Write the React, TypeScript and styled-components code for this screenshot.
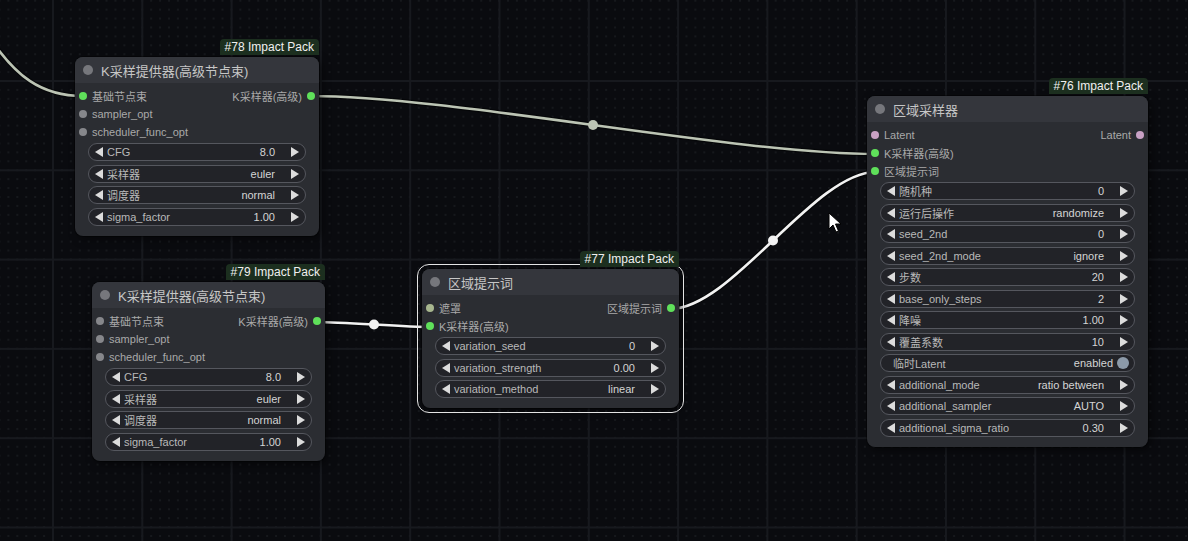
import React from "react";
import styled, { createGlobalStyle, css } from "styled-components";

const GlobalStyle = createGlobalStyle`
  html, body { margin: 0; padding: 0; background: #0b0c10; }
  body { font-family: "Liberation Sans", Arial, "Noto Sans CJK SC", sans-serif; }
`;

const Canvas = styled.div`
  position: relative;
  width: 1188px;
  height: 541px;
  overflow: hidden;
  background-color: #0a0b0f;
  background-image:
    linear-gradient(to right, #17191e 2px, transparent 2px),
    linear-gradient(to bottom, #17191e 2px, transparent 2px),
    radial-gradient(circle at 1px 1px, #16181c 0.9px, transparent 1.2px);
  background-size: 89.3px 89.3px, 89.3px 89.3px, 8.93px 8.93px;
  background-position: 52px 0, 0 80px, 52px 80px;
`;

const LinkLayer = styled.svg`
  position: absolute;
  left: 0;
  top: 0;
  width: 1188px;
  height: 541px;
`;

const NodeBox = styled.div<{ $x: number; $y: number; $w: number; $selected?: boolean }>`
  position: absolute;
  left: ${(p) => p.$x}px;
  top: ${(p) => p.$y}px;
  width: ${(p) => p.$w}px;
  background: #2b2d32;
  border-radius: 8px;
  box-shadow: 0 0 0 1px rgba(0, 0, 0, 0.35), 3px 3px 8px rgba(0, 0, 0, 0.5);
  display: flex;
  flex-direction: column;
  ${(p) =>
    p.$selected &&
    css`
      &::before {
        content: "";
        position: absolute;
        inset: -5px;
        border: 1.5px solid #e4e4e4;
        border-radius: 12px;
        pointer-events: none;
      }
    `}
`;

const Badge = styled.div`
  position: absolute;
  right: 0;
  bottom: calc(100% + 2px);
  height: 16px;
  line-height: 16px;
  padding: 0 5px;
  background: #1c2f1f;
  color: #f0f0f0;
  font-size: 12px;
  border-radius: 4px 4px 0 0;
  white-space: nowrap;
`;

const TitleBar = styled.div`
  height: 26px;
  display: flex;
  align-items: center;
  gap: 8px;
  padding: 0 8px;
  background: #34363c;
  border-radius: 8px 8px 0 0;
  color: #c6c6c6;
  font-size: 13px;
`;

const TitleDot = styled.span`
  width: 10px;
  height: 10px;
  border-radius: 50%;
  background: #76777c;
  flex: none;
`;

const Body = styled.div`
  padding: 4px 0 10px;
  display: flex;
  flex-direction: column;
`;

const SlotRow = styled.div`
  height: 18px;
  display: flex;
  align-items: center;
  justify-content: space-between;
  padding: 0 4px;
  font-size: 11px;
  color: #a9a9a9;
`;

const SlotSide = styled.div<{ $out?: boolean }>`
  display: flex;
  align-items: center;
  gap: 5px;
  flex-direction: ${(p) => (p.$out ? "row-reverse" : "row")};
`;

const SlotDot = styled.span<{ $color: string }>`
  width: 8px;
  height: 8px;
  border-radius: 50%;
  background: ${(p) => p.$color};
  flex: none;
`;

const WidgetList = styled.div`
  display: flex;
  flex-direction: column;
  gap: 3.5px;
  margin: 2px 13px 0 13px;
`;

const Widget = styled.div<{ $toggle?: boolean }>`
  height: 18px;
  box-sizing: border-box;
  border: 1px solid #55575e;
  border-radius: 9px;
  background: #222328;
  display: flex;
  align-items: center;
  padding: ${(p) => (p.$toggle ? "0 5px 0 12px" : "0 6px")};
  font-size: 11px;
  white-space: nowrap;
`;

const ArrowLeft = styled.span`
  width: 0;
  height: 0;
  border-top: 5px solid transparent;
  border-bottom: 5px solid transparent;
  border-right: 8px solid #dcdcdc;
  flex: none;
`;

const ArrowRight = styled.span`
  width: 0;
  height: 0;
  border-top: 5px solid transparent;
  border-bottom: 5px solid transparent;
  border-left: 8px solid #dcdcdc;
  flex: none;
`;

const WLabel = styled.span<{ $toggle?: boolean }>`
  margin-left: ${(p) => (p.$toggle ? 0 : 4)}px;
  color: #b9b9b9;
`;

const WValue = styled.span<{ $toggle?: boolean }>`
  margin-left: auto;
  margin-right: ${(p) => (p.$toggle ? 4 : 16)}px;
  color: #d4d4d4;
`;

const ToggleKnob = styled.span`
  width: 12px;
  height: 12px;
  border-radius: 50%;
  background: #8c9aa9;
  flex: none;
`;

const Cursor = styled.svg`
  position: absolute;
  left: 828px;
  top: 212px;
`;

const GREEN = "#5fe05a";
const GREY = "#86878b";
const PINK = "#c9a1c4";
const OLIVE = "#a7b68e";

type Slot = { label: string; color: string };
type WidgetDef = { label: string; value: string; toggle?: boolean };
type NodeDef = {
  id: string;
  title: string;
  x: number;
  y: number;
  w: number;
  selected?: boolean;
  inputs: Slot[];
  outputs: Slot[];
  widgets: WidgetDef[];
};

const samplerWidgets: WidgetDef[] = [
  { label: "CFG", value: "8.0" },
  { label: "采样器", value: "euler" },
  { label: "调度器", value: "normal" },
  { label: "sigma_factor", value: "1.00" },
];

const nodes: NodeDef[] = [
  {
    id: "#78 Impact Pack",
    title: "K采样提供器(高级节点束)",
    x: 75,
    y: 57,
    w: 244,
    inputs: [
      { label: "基础节点束", color: GREEN },
      { label: "sampler_opt", color: GREY },
      { label: "scheduler_func_opt", color: GREY },
    ],
    outputs: [{ label: "K采样器(高级)", color: GREEN }],
    widgets: samplerWidgets,
  },
  {
    id: "#79 Impact Pack",
    title: "K采样提供器(高级节点束)",
    x: 92,
    y: 282,
    w: 233,
    inputs: [
      { label: "基础节点束", color: GREY },
      { label: "sampler_opt", color: GREY },
      { label: "scheduler_func_opt", color: GREY },
    ],
    outputs: [{ label: "K采样器(高级)", color: GREEN }],
    widgets: samplerWidgets,
  },
  {
    id: "#77 Impact Pack",
    title: "区域提示词",
    x: 422,
    y: 269,
    w: 257,
    selected: true,
    inputs: [
      { label: "遮罩", color: OLIVE },
      { label: "K采样器(高级)", color: GREEN },
    ],
    outputs: [{ label: "区域提示词", color: GREEN }],
    widgets: [
      { label: "variation_seed", value: "0" },
      { label: "variation_strength", value: "0.00" },
      { label: "variation_method", value: "linear" },
    ],
  },
  {
    id: "#76 Impact Pack",
    title: "区域采样器",
    x: 867,
    y: 96,
    w: 281,
    inputs: [
      { label: "Latent", color: PINK },
      { label: "K采样器(高级)", color: GREEN },
      { label: "区域提示词", color: GREEN },
    ],
    outputs: [{ label: "Latent", color: PINK }],
    widgets: [
      { label: "随机种", value: "0" },
      { label: "运行后操作", value: "randomize" },
      { label: "seed_2nd", value: "0" },
      { label: "seed_2nd_mode", value: "ignore" },
      { label: "步数", value: "20" },
      { label: "base_only_steps", value: "2" },
      { label: "降噪", value: "1.00" },
      { label: "覆盖系数", value: "10" },
      { label: "临时Latent", value: "enabled", toggle: true },
      { label: "additional_mode", value: "ratio between" },
      { label: "additional_sampler", value: "AUTO" },
      { label: "additional_sigma_ratio", value: "0.30" },
    ],
  },
];

function GraphNode({ node }: { node: NodeDef }) {
  const rows = Math.max(node.inputs.length, node.outputs.length);
  return (
    <NodeBox $x={node.x} $y={node.y} $w={node.w} $selected={node.selected}>
      <Badge>{node.id}</Badge>
      <TitleBar>
        <TitleDot />
        <span>{node.title}</span>
      </TitleBar>
      <Body>
        {Array.from({ length: rows }).map((_, i) => {
          const inp = node.inputs[i];
          const out = node.outputs[i];
          return (
            <SlotRow key={i}>
              <SlotSide>
                {inp && (
                  <>
                    <SlotDot $color={inp.color} />
                    <span>{inp.label}</span>
                  </>
                )}
              </SlotSide>
              <SlotSide $out>
                {out && (
                  <>
                    <SlotDot $color={out.color} />
                    <span>{out.label}</span>
                  </>
                )}
              </SlotSide>
            </SlotRow>
          );
        })}
        <WidgetList>
          {node.widgets.map((w) =>
            w.toggle ? (
              <Widget key={w.label} $toggle>
                <WLabel $toggle>{w.label}</WLabel>
                <WValue $toggle>{w.value}</WValue>
                <ToggleKnob />
              </Widget>
            ) : (
              <Widget key={w.label}>
                <ArrowLeft />
                <WLabel>{w.label}</WLabel>
                <WValue>{w.value}</WValue>
                <ArrowRight />
              </Widget>
            )
          )}
        </WidgetList>
      </Body>
    </NodeBox>
  );
}

const DIM = "#bcc4b4";
const BRIGHT = "#f2f2f2";

const links = [
  { d: "M -10 38 C 15 75, 40 96, 83 96", color: DIM },
  { d: "M 310 96 C 452 96, 734 154, 876 154", color: DIM, dot: [593, 125] },
  { d: "M 316 322 C 345 322, 403 327, 432 327", color: BRIGHT, dot: [374, 324.5] },
  { d: "M 670 309 C 732 309, 814 172, 876 172", color: BRIGHT, dot: [773, 240.5] },
];

export default function App() {
  return (
    <>
      <GlobalStyle />
      <Canvas>
        <LinkLayer viewBox="0 0 1188 541">
          {links.map((l, i) => (
            <g key={i}>
              <path d={l.d} stroke="rgba(0,0,0,0.45)" strokeWidth={5} fill="none" />
              <path d={l.d} stroke={l.color} strokeWidth={2.6} fill="none" />
              {l.dot && <circle cx={l.dot[0]} cy={l.dot[1]} r={5} fill={l.color} />}
            </g>
          ))}
        </LinkLayer>
        {nodes.map((n) => (
          <GraphNode key={n.id} node={n} />
        ))}
        <Cursor width="14" height="22" viewBox="0 0 14 22">
          <path
            d="M1 1 L1 17 L5 13 L8 20 L10.5 19 L7.5 12 L13 12 Z"
            fill="#ffffff"
            stroke="#000000"
            strokeWidth="1"
            strokeLinejoin="round"
          />
        </Cursor>
      </Canvas>
    </>
  );
}
